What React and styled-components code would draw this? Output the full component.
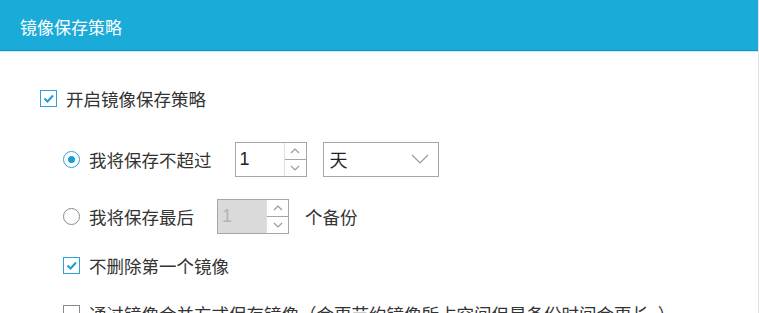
import styled, { createGlobalStyle } from "styled-components";

const GlobalStyle = createGlobalStyle`
  html, body {
    margin: 0;
    padding: 0;
    background: #ffffff;
  }
  body {
    font-family: "Noto Sans CJK SC", "Noto Sans", sans-serif;
  }
`;

export default function App() {
  return (
    <>
      <GlobalStyle />
      <Panel>
        <Header>镜像保存策略</Header>
        <Body>
          <Row $top={30}>
            <CheckBox checked />
            <Label>开启镜像保存策略</Label>
          </Row>
          <Row $top={27} $indent>
            <Radio checked />
            <Label>我将保存不超过</Label>
            <Spin value="1" />
            <Select>
              <span>天</span>
              <svg width="18" height="10" viewBox="0 0 18 10">
                <path d="M1 1 L9 9 L17 1" fill="none" stroke="#9a9a9a" strokeWidth="1.2" />
              </svg>
            </Select>
          </Row>
          <Row $top={23} $indent>
            <Radio />
            <Label>我将保存最后</Label>
            <Spin value="1" disabled />
            <Unit>个备份</Unit>
          </Row>
          <Row $top={15} $indent>
            <CheckBox checked />
            <Label>不删除第一个镜像</Label>
          </Row>
          <Row $top={14} $indent>
            <CheckBox />
            <Label>通过镜像合并方式保存镜像（会更节约镜像所占空间但是备份时间会更长。）</Label>
          </Row>
        </Body>
      </Panel>
    </>
  );
}

function CheckBox({ checked }) {
  return (
    <Box $checked={checked}>
      {checked && (
        <svg width="13" height="13" viewBox="0 0 13 13">
          <path d="M2.5 6.5 L5.5 9.5 L11 3.5" fill="none" stroke="#1b9dd6" strokeWidth="2" />
        </svg>
      )}
    </Box>
  );
}

function Radio({ checked }) {
  return <Circle $checked={checked}>{checked && <Dot />}</Circle>;
}

function Spin({ value, disabled }) {
  return (
    <SpinBox>
      <SpinField $disabled={disabled}>{value}</SpinField>
      <SpinButtons>
        <SpinButton>
          <svg width="10" height="6" viewBox="0 0 10 6">
            <path d="M1 5 L5 1 L9 5" fill="none" stroke="#9a9a9a" strokeWidth="1.2" />
          </svg>
        </SpinButton>
        <SpinButton $bottom>
          <svg width="10" height="6" viewBox="0 0 10 6">
            <path d="M1 1 L5 5 L9 1" fill="none" stroke="#9a9a9a" strokeWidth="1.2" />
          </svg>
        </SpinButton>
      </SpinButtons>
    </SpinBox>
  );
}

const Panel = styled.div`
  width: 759px;
  height: 313px;
  overflow: hidden;
  box-sizing: border-box;
  border-right: 1px solid #e2e2e2;
  background: #ffffff;
`;

const Header = styled.div`
  height: 51px;
  box-sizing: border-box;
  display: flex;
  align-items: center;
  padding-left: 20px;
  background: #1aabd9;
  border-bottom: 1px solid #1592bb;
  box-shadow: 0 1px 0 #c2f1f9;
  color: #ffffff;
  font-size: 17px;
  padding-top: 2px;
`;

const Body = styled.div`
  display: flex;
  flex-direction: column;
  padding-left: 40px;
`;

const Row = styled.div`
  display: flex;
  align-items: center;
  height: 34px;
  margin-top: ${(p) => p.$top}px;
  padding-left: ${(p) => (p.$indent ? 23 : 0)}px;
`;

const Box = styled.span`
  width: 17px;
  height: 17px;
  box-sizing: border-box;
  border: 1px solid ${(p) => (p.$checked ? "#2aa3d8" : "#8a8a8a")};
  background: #ffffff;
  display: flex;
  align-items: center;
  justify-content: center;
  flex-shrink: 0;
`;

const Circle = styled.span`
  width: 17px;
  height: 17px;
  box-sizing: border-box;
  border-radius: 50%;
  border: 1px solid ${(p) => (p.$checked ? "#2aa3d8" : "#8a8a8a")};
  display: flex;
  align-items: center;
  justify-content: center;
  flex-shrink: 0;
`;

const Dot = styled.span`
  width: 7px;
  height: 7px;
  border-radius: 50%;
  background: #1b9dd6;
`;

const Label = styled.span`
  margin-left: 9px;
  font-size: 17.5px;
  color: #333333;
  white-space: nowrap;
`;

const SpinBox = styled.div`
  margin-left: 23px;
  width: 72px;
  height: 35px;
  box-sizing: border-box;
  border: 1px solid #a6a6a6;
  display: flex;
`;

const SpinField = styled.div`
  flex: 1;
  display: flex;
  align-items: center;
  padding-left: 4px;
  font-family: "Liberation Sans", Arial, sans-serif;
  font-size: 18px;
  color: ${(p) => (p.$disabled ? "#b4b4b4" : "#222222")};
  background: ${(p) => (p.$disabled ? "#dadada" : "#ffffff")};
`;

const SpinButtons = styled.div`
  width: 21px;
  display: flex;
  flex-direction: column;
  border-left: 1px solid #dedede;
  background: #ffffff;
`;

const SpinButton = styled.div`
  flex: 1;
  display: flex;
  align-items: center;
  justify-content: center;
  border-top: ${(p) => (p.$bottom ? "1px solid #a6a6a6" : "none")};
`;

const Select = styled.div`
  margin-left: 16px;
  width: 116px;
  height: 35px;
  box-sizing: border-box;
  border: 1px solid #a6a6a6;
  display: flex;
  align-items: center;
  justify-content: space-between;
  padding: 0 9px 0 6px;
  font-size: 18px;
  color: #222222;
`;

const Unit = styled.span`
  margin-left: 16px;
  font-size: 17.5px;
  color: #333333;
`;
